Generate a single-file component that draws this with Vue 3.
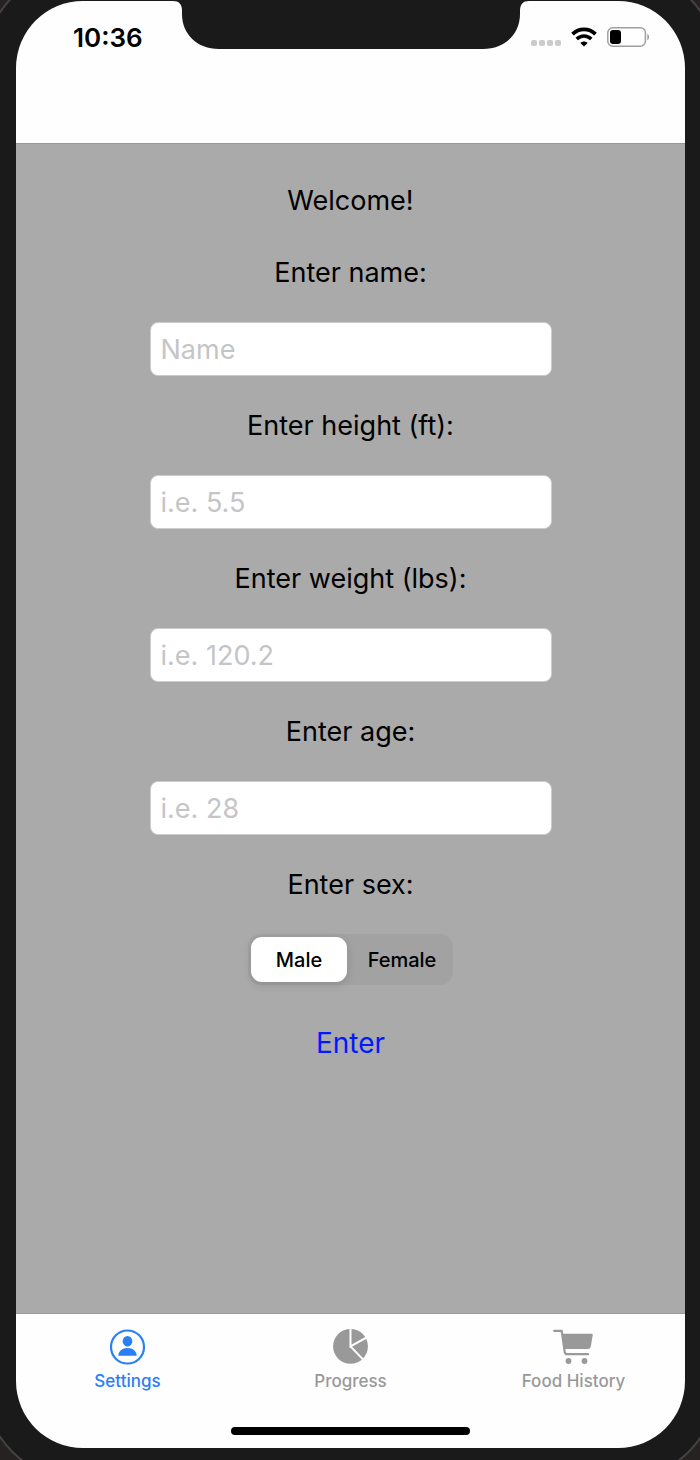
<script setup>
import { reactive, ref } from 'vue'

const fields = [
  { id: 'name', label: 'Enter name:', placeholder: 'Name' },
  { id: 'height', label: 'Enter height (ft):', placeholder: 'i.e. 5.5' },
  { id: 'weight', label: 'Enter weight (lbs):', placeholder: 'i.e. 120.2' },
  { id: 'age', label: 'Enter age:', placeholder: 'i.e. 28' },
]
const form = reactive({ name: '', height: '', weight: '', age: '' })
const sexes = ['Male', 'Female']
const sex = ref('Male')
const tab = ref('settings')
</script>

<template>
  <div class="stage">
    <div class="screen">
      <header class="header">
        <div class="time">10:36</div>
        <svg class="notch" width="356" height="49" viewBox="0 0 356 49" aria-hidden="true">
          <path d="M0 0C6 0 9 3 9 10V13C9 33 24 48 46 48H310C332 48 347 33 347 13V10C347 3 350 0 356 0Z" fill="#1a1a1a" />
        </svg>
        <div class="status">
          <svg width="31" height="8" viewBox="0 0 31 8" fill="#cbcbcb" aria-hidden="true">
            <rect x="0" y="1" width="6" height="6" rx="2" />
            <rect x="8" y="1" width="6" height="6" rx="2" />
            <rect x="16" y="1" width="6" height="6" rx="2" />
            <rect x="24" y="1" width="6" height="6" rx="2" />
          </svg>
          <svg class="wifi" width="26" height="20" viewBox="0 0 26 20" fill="none" stroke="#000" aria-hidden="true">
            <path d="M1.500 7.200C8 .700 18 .700 24.500 7.200" stroke-width="3.800" />
            <path d="M5.700 12C10 7.900 16 7.900 20.300 12" stroke-width="3.600" />
            <path d="M13 19.500L9.300 15.900C11.500 13.900 14.500 13.900 16.700 15.900Z" fill="#000" stroke="none" />
          </svg>
          <svg class="battery" width="43" height="20" viewBox="0 0 43 20" aria-hidden="true">
            <rect x=".8" y=".8" width="37.600" height="18.400" rx="5" fill="#fff" stroke="#a0a0a0" stroke-width="1.500" />
            <rect x="3" y="3" width="11" height="14" rx="3" fill="#000" />
            <path d="M40.300 6.500C42.600 8 42.600 12 40.300 13.500Z" fill="#a0a0a0" />
          </svg>
        </div>
      </header>

      <main class="content">
        <h1 class="welcome">Welcome!</h1>
        <form class="form" @submit.prevent>
          <template v-for="f in fields" :key="f.id">
            <label class="label" :for="f.id">{{ f.label }}</label>
            <input :id="f.id" v-model="form[f.id]" class="field" type="text" :placeholder="f.placeholder" />
          </template>
          <div id="sex-label" class="label">Enter sex:</div>
          <div class="segments" role="radiogroup" aria-labelledby="sex-label">
            <label v-for="s in sexes" :key="s" class="segment" :class="{ on: sex === s }">
              <input v-model="sex" type="radio" name="sex" :value="s" />
              <span>{{ s }}</span>
            </label>
          </div>
          <button class="enter" type="submit">Enter</button>
        </form>
      </main>

      <footer class="footer">
        <nav class="tabs">
          <button class="tab" :class="{ active: tab === 'settings' }" type="button" @click="tab = 'settings'">
            <svg width="36" height="36" viewBox="0 0 36 36" aria-hidden="true">
              <circle cx="17.500" cy="18" r="16.500" fill="none" stroke="currentColor" stroke-width="2.200" />
              <ellipse cx="17.500" cy="12.200" rx="4.800" ry="5.200" fill="currentColor" />
              <path d="M8.300 26.800C8.300 22.500 12 19 17.500 19S26.700 22.500 26.700 26.800Z" fill="currentColor" />
            </svg>
            <span>Settings</span>
          </button>
          <button class="tab" :class="{ active: tab === 'progress' }" type="button" @click="tab = 'progress'">
            <svg width="36" height="36" viewBox="0 0 36 36" aria-hidden="true">
              <circle cx="17.500" cy="17.400" r="17.400" fill="currentColor" />
              <path d="M17.500 -1V17.400L34.500 8M17.500 17.400L30.200 30.600" fill="none" stroke="#fefefe" stroke-width="2" />
            </svg>
            <span>Progress</span>
          </button>
          <button class="tab" :class="{ active: tab === 'history' }" type="button" @click="tab = 'history'">
            <svg width="42" height="36" viewBox="0 0 42 36" aria-hidden="true">
              <path d="M1.200 1.800H8.700L11.700 23C12 24.600 12.600 25.200 14 25.200H35" fill="none" stroke="currentColor" stroke-width="2.200" stroke-linecap="round" stroke-linejoin="round" />
              <path d="M9.500 4.800H38.500Q39.900 4.800 39.700 6.200L37.800 17.500Q37.300 20 34.800 20H11.500Z" fill="currentColor" />
              <circle cx="15.500" cy="32" r="2.900" fill="currentColor" />
              <circle cx="31.500" cy="32" r="2.900" fill="currentColor" />
            </svg>
            <span>Food History</span>
          </button>
        </nav>
        <div class="home"></div>
      </footer>
    </div>
  </div>
</template>

<style>
body {
  margin: 0;
  background: #262221;
}
</style>

<style scoped>
.stage {
  box-sizing: border-box;
  min-height: 100vh;
  padding: 1px 15px 12px 16px;
  display: flex;
  overflow: hidden;
  background: #262221;
  font-family: Inter, "Liberation Sans", sans-serif;
  color: #000;
}
.screen {
  flex: 1;
  min-width: 0;
  display: flex;
  flex-direction: column;
  border-radius: 67px;
  background: #fefefe;
  box-shadow: 0 0 0 32px #1a1a1a, 0 0 0 34px #444343;
}
.header {
  box-sizing: border-box;
  height: 143px;
  display: grid;
  grid-template-columns: 1fr 356px 1fr;
  align-items: start;
  border-bottom: 1px solid #999;
}
.time {
  padding: 20px 0 0 57px;
  font-size: 26px;
  line-height: 34px;
  font-weight: 600;
}
.notch {
  display: block;
}
.status {
  display: flex;
  align-items: flex-end;
  justify-content: flex-end;
  padding: 26px 35px 0 0;
}
.status svg {
  flex: none;
}
.wifi {
  margin: 0 10px 0 9px;
}
.content {
  flex: 1;
  padding: 40px 20px;
  background: #aaa;
}
.welcome {
  margin: 0 0 39px;
  font-size: 27px;
  line-height: 33px;
  font-weight: 400;
  text-align: center;
}
.form {
  display: flex;
  flex-direction: column;
  align-items: center;
  gap: 33px;
}
.label {
  font-size: 27px;
  line-height: 33px;
}
.field {
  box-sizing: border-box;
  width: 402px;
  max-width: 100%;
  height: 54px;
  padding: 0 10px;
  border: 1px solid #ccc;
  border-radius: 8px;
  background: #fff;
  font: inherit;
  font-size: 27px;
}
.field::placeholder {
  color: #c5c5c7;
  opacity: 1;
}
.segments {
  display: flex;
  gap: 7px;
  box-sizing: border-box;
  height: 51px;
  padding: 3px;
  border-radius: 13px;
  background: #a2a2a2;
}
.segment {
  position: relative;
  display: flex;
  align-items: center;
  justify-content: center;
  width: 96px;
  border-radius: 11px;
  font-size: 20px;
  font-weight: 500;
}
.segment.on {
  background: #fff;
  box-shadow: 0 3px 10px rgba(0, 0, 0, 0.12);
}
.segment input {
  position: absolute;
  inset: 0;
  width: 100%;
  height: 100%;
  margin: 0;
  opacity: 0;
}
.enter {
  margin: 8px 0 0;
  padding: 0;
  border: 0;
  background: none;
  color: #0019ff;
  font: inherit;
  font-size: 28px;
  line-height: 34px;
}
.footer {
  box-sizing: border-box;
  height: 135px;
  padding-bottom: 13px;
  display: flex;
  flex-direction: column;
  justify-content: space-between;
  align-items: center;
  border-top: 1px solid #999;
}
.tabs {
  width: 100%;
  display: grid;
  grid-template-columns: repeat(3, 1fr);
}
.tab {
  display: flex;
  flex-direction: column;
  align-items: center;
  gap: 6px;
  padding: 15px 0 0;
  border: 0;
  background: none;
  color: #999;
  font: inherit;
  font-size: 17px;
  line-height: 20px;
  font-weight: 500;
}
.tab.active {
  color: #2b7ff6;
}
.home {
  width: 239px;
  height: 8px;
  border-radius: 4px;
  background: #000;
}
</style>
